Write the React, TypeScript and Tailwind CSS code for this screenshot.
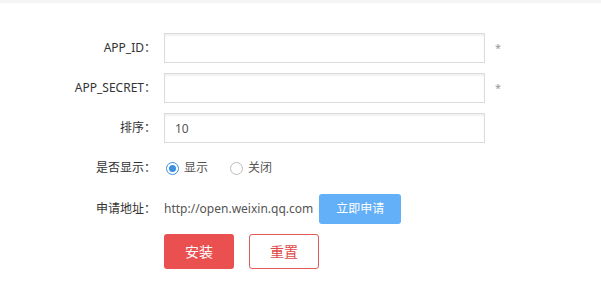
import React, { useState } from 'react';

const font = { fontFamily: '"Noto Sans", "Noto Sans CJK SC", sans-serif' };

function Row({ label, className = '', children }: { label: string; className?: string; children: React.ReactNode }) {
  return (
    <div className={`flex items-center h-[30px] ${className}`}>
      <label className="w-[164px] pr-[8px] text-right text-[12px] text-[#333] shrink-0">{label}：</label>
      {children}
    </div>
  );
}

function Radio({ checked, label, onClick }: { checked: boolean; label: string; onClick: () => void }) {
  return (
    <span className="flex items-center cursor-pointer" onClick={onClick}>
      <span
        className={`w-[13px] h-[13px] rounded-full border flex items-center justify-center bg-white ${
          checked ? 'border-[#3c8ee0]' : 'border-[#bdbdbd]'
        }`}
      >
        {checked && <span className="w-[7px] h-[7px] rounded-full bg-[#3c8ee0]" />}
      </span>
      <span className="ml-[5px] text-[12px] text-[#555]">{label}</span>
    </span>
  );
}

export default function App() {
  const [appId, setAppId] = useState('');
  const [secret, setSecret] = useState('');
  const [sort, setSort] = useState('10');
  const [show, setShow] = useState(true);

  const inputCls =
    'w-[321px] h-[30px] px-[10px] border border-[#dcdcdc] shadow-[inset_0_2px_2px_rgba(0,0,0,0.06)] text-[12px] text-[#555] outline-none';

  return (
    <div className="w-[601px] h-[293px] bg-white" style={font}>
      <div className="h-[3px] bg-[#f5f5f5]" />
      <div className="pt-[30px] flex flex-col gap-[10px]">
        <Row label="APP_ID">
          <input className={inputCls} value={appId} onChange={(e) => setAppId(e.target.value)} />
          <span className="ml-[10px] text-[11px] text-[#999]">*</span>
        </Row>
        <Row label="APP_SECRET">
          <input className={inputCls} value={secret} onChange={(e) => setSecret(e.target.value)} />
          <span className="ml-[10px] text-[11px] text-[#999]">*</span>
        </Row>
        <Row label="排序">
          <input className={inputCls} value={sort} onChange={(e) => setSort(e.target.value)} />
        </Row>
        <Row label="是否显示">
          <div className="flex items-center gap-[22px] pl-[2px]">
            <Radio checked={show} label="显示" onClick={() => setShow(true)} />
            <Radio checked={!show} label="关闭" onClick={() => setShow(false)} />
          </div>
        </Row>
        <Row label="申请地址" className="mt-[1px]">
          <span className="text-[12px] text-[#555]">http://open.weixin.qq.com</span>
          <button className="ml-[6px] w-[82px] h-[30px] rounded-[3px] bg-[#63aff8] text-white text-[12px]">
            立即申请
          </button>
        </Row>
        <div className="flex pl-[164px] gap-[15px]">
          <button className="w-[70px] h-[35px] rounded-[3px] bg-[#ea5050] text-white text-[14px]">安装</button>
          <button className="w-[70px] h-[35px] rounded-[3px] border border-[#e05a5a] bg-white text-[#e04848] text-[14px]">
            重置
          </button>
        </div>
      </div>
    </div>
  );
}
